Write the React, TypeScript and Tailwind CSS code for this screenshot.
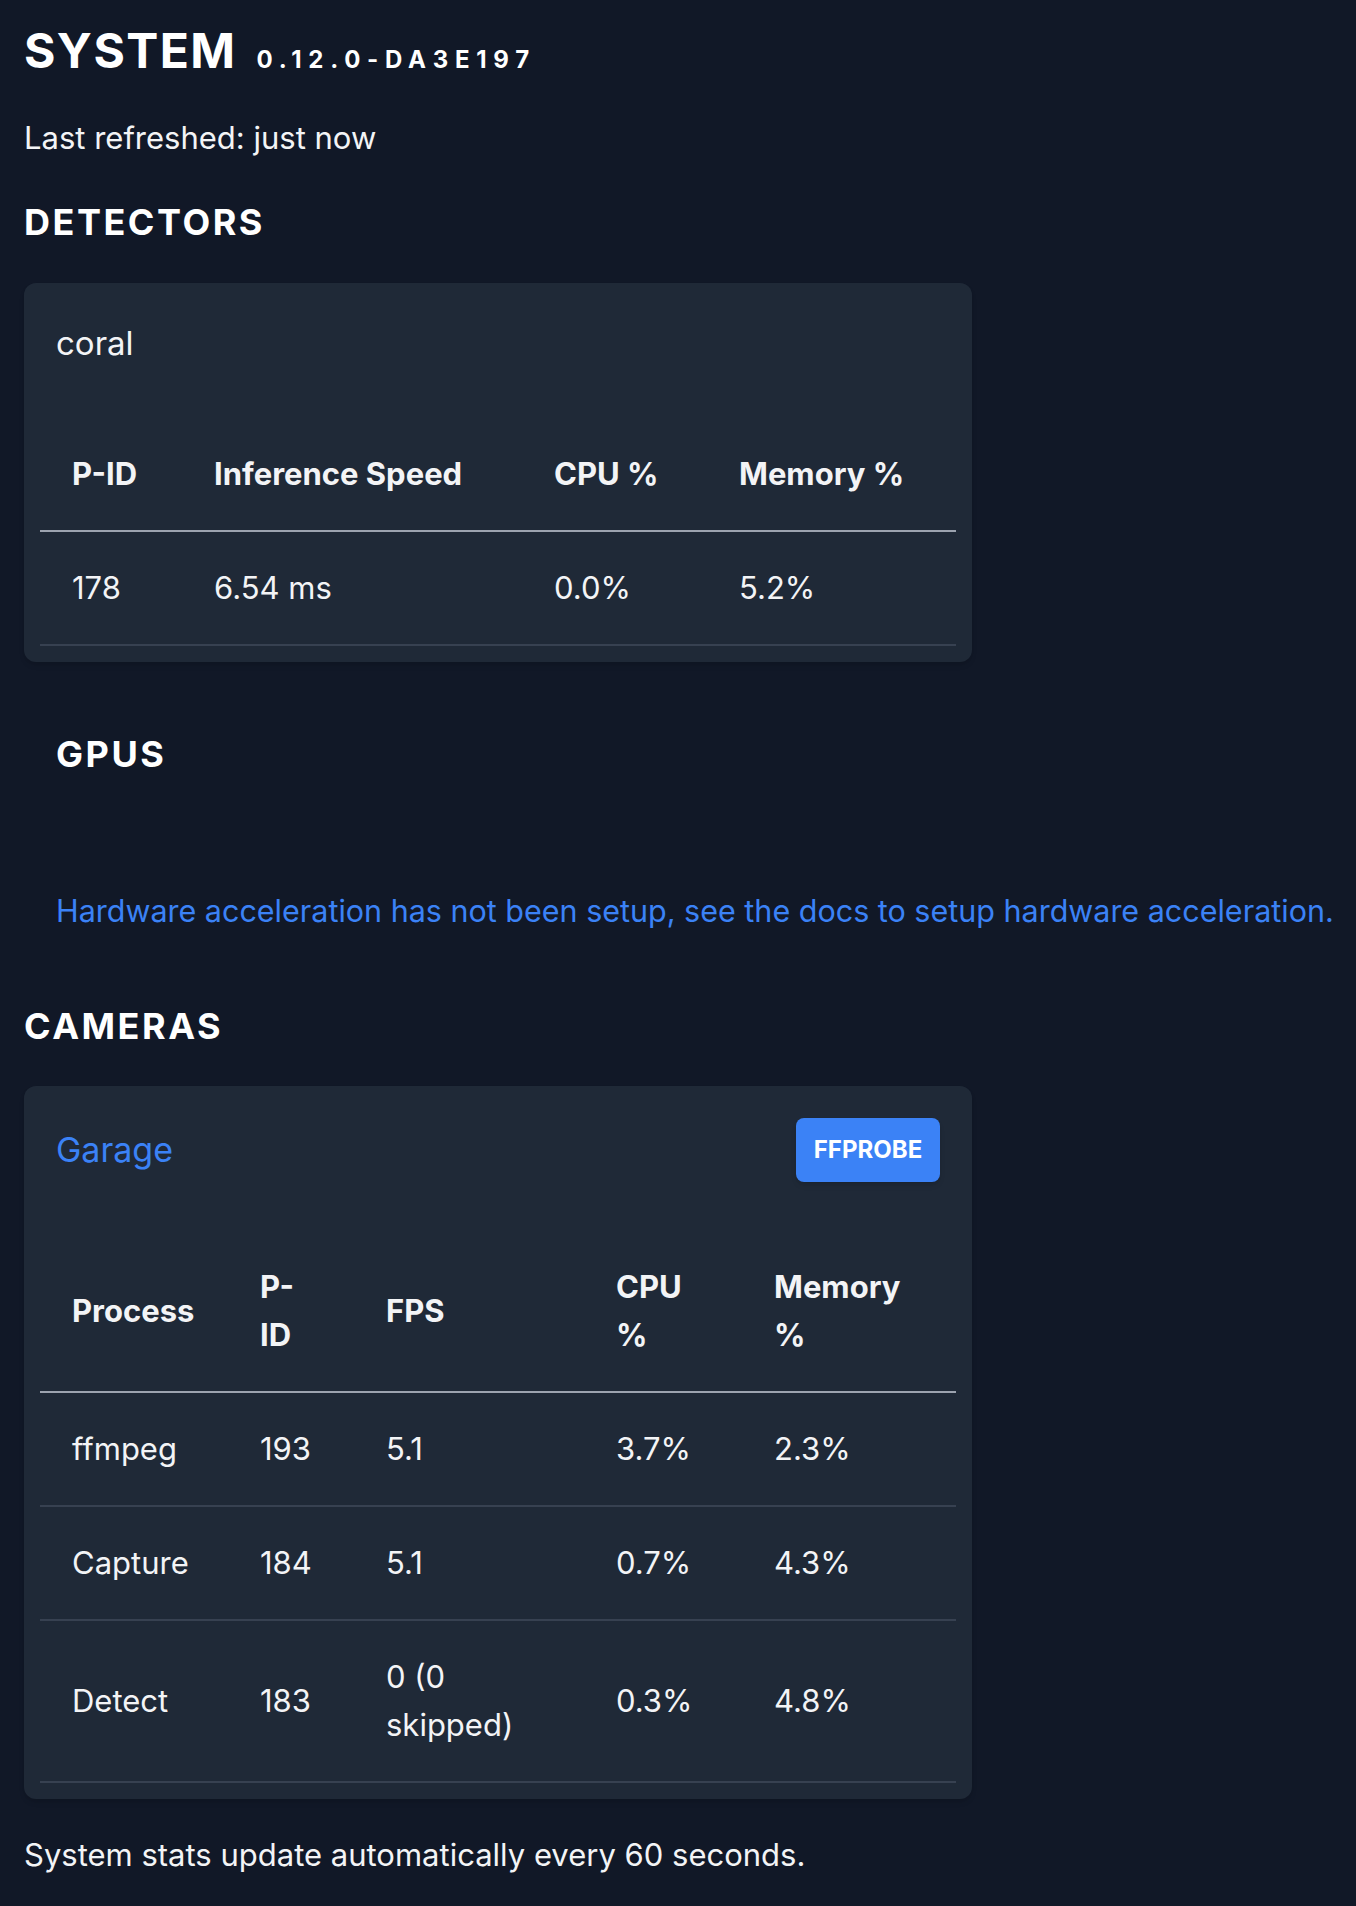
import React from "react";

const font = { fontFamily: "Inter, 'Noto Sans', sans-serif" };

function DetectorCard() {
  return (
    <div className="mt-[37px] w-[948px] rounded-[12px] bg-[#1f2937] p-[16px] shadow-md">
      <div className="px-[16px] pt-[20px] text-[33px] leading-[48px] text-gray-100">coral</div>
      <table className="mt-[51px] w-full table-fixed border-collapse text-left text-[31px] leading-[48px] text-gray-100">
        <thead>
          <tr className="border-b-2 border-[#9ca3af]">
            <th className="w-[142px] px-[32px] py-[32px] font-bold">P-ID</th>
            <th className="w-[340px] px-[32px] py-[32px] font-bold">Inference Speed</th>
            <th className="w-[185px] px-[32px] py-[32px] font-bold">CPU %</th>
            <th className="px-[32px] py-[32px] font-bold">Memory %</th>
          </tr>
        </thead>
        <tbody>
          <tr className="border-b-2 border-[#374151]">
            <td className="px-[32px] py-[32px]">178</td>
            <td className="px-[32px] py-[32px]">6.54 ms</td>
            <td className="px-[32px] py-[32px]">0.0%</td>
            <td className="px-[32px] py-[32px]">5.2%</td>
          </tr>
        </tbody>
      </table>
    </div>
  );
}

const cameraRows = [
  { name: "ffmpeg", pid: "193", fps: "5.1", cpu: "3.7%", mem: "2.3%" },
  { name: "Capture", pid: "184", fps: "5.1", cpu: "0.7%", mem: "4.3%" },
  { name: "Detect", pid: "183", fps: "0 (0 skipped)", cpu: "0.3%", mem: "4.8%" },
];

function CameraCard() {
  return (
    <div className="mt-[36px] w-[948px] rounded-[12px] bg-[#1f2937] p-[16px] shadow-md">
      <div className="flex items-center justify-between px-[16px] pt-[16px]">
        <span className="text-[34px] leading-[48px] text-[#3b82f6]">Garage</span>
        <button className="h-[64px] w-[144px] rounded-[8px] bg-[#3b82f6] text-[24px] font-bold text-white shadow-md">
          FFPROBE
        </button>
      </div>
      <table className="mt-[49px] w-full table-fixed border-collapse text-left text-[31px] leading-[48px] text-gray-100">
        <thead>
          <tr className="border-b-2 border-[#9ca3af]">
            <th className="w-[188px] px-[32px] py-[32px] font-bold">Process</th>
            <th className="w-[126px] px-[32px] py-[32px] font-bold">
              P-
              <br />
              ID
            </th>
            <th className="w-[230px] px-[32px] py-[32px] font-bold">FPS</th>
            <th className="w-[158px] px-[32px] py-[32px] font-bold">
              CPU
              <br />%
            </th>
            <th className="px-[32px] py-[32px] font-bold">
              Memory
              <br />%
            </th>
          </tr>
        </thead>
        <tbody>
          {cameraRows.map((r) => (
            <tr key={r.name} className="border-b-2 border-[#374151]">
              <td className="px-[32px] py-[32px]">{r.name}</td>
              <td className="px-[32px] py-[32px]">{r.pid}</td>
              <td className="px-[32px] py-[32px]">
                {r.fps === "0 (0 skipped)" ? (
                  <>
                    0 (0
                    <br />
                    skipped)
                  </>
                ) : (
                  r.fps
                )}
              </td>
              <td className="px-[32px] py-[32px]">{r.cpu}</td>
              <td className="px-[32px] py-[32px]">{r.mem}</td>
            </tr>
          ))}
        </tbody>
      </table>
    </div>
  );
}

export default function App() {
  return (
    <div className="min-h-[1906px] w-full bg-[#111827] px-[24px] pt-[21px] text-gray-100" style={font}>
      <h1 className="flex h-[60px] items-baseline gap-[20px] font-bold text-white">
        <span className="text-[48px] leading-[60px] tracking-[0.03em]">SYSTEM</span>
        <span className="text-[24px] leading-[60px] tracking-[0.28em]">0.12.0-DA3E197</span>
      </h1>
      <p className="mt-[33px] text-[31px] leading-[48px]">Last refreshed: just now</p>

      <h2 className="mt-[36px] text-[36px] font-bold leading-[48px] tracking-[0.07em] text-white">DETECTORS</h2>
      <DetectorCard />

      <div className="pl-[32px]">
        <h2 className="mt-[68px] text-[36px] font-bold leading-[48px] tracking-[0.07em] text-white">GPUS</h2>
        <p className="mt-[109px] whitespace-nowrap text-[30.5px] leading-[48px] text-[#3b82f6]">
          Hardware acceleration has not been setup, see the docs to setup hardware acceleration.
        </p>
      </div>

      <h2 className="mt-[67px] text-[36px] font-bold leading-[48px] tracking-[0.07em] text-white">CAMERAS</h2>
      <CameraCard />

      <p className="mt-[32px] text-[31px] leading-[48px]">System stats update automatically every 60 seconds.</p>
    </div>
  );
}
